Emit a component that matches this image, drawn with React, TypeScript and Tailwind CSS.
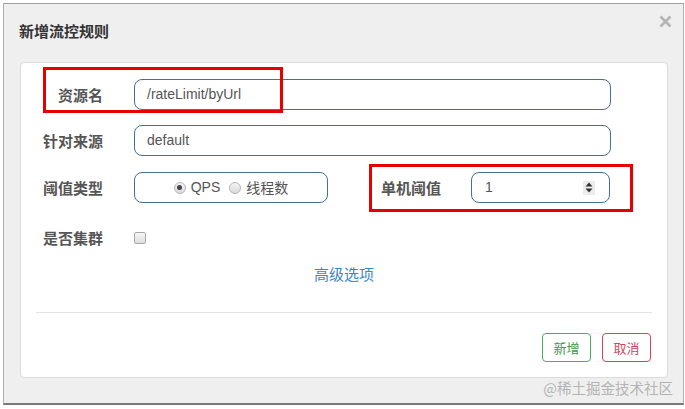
import React from "react";

const cjk = { fontFamily: '"Noto Sans CJK SC", "Liberation Sans", sans-serif' };
const latin = { fontFamily: '"Liberation Sans", "Noto Sans CJK SC", sans-serif' };

function Radio({ checked, label }: { checked?: boolean; label: string }) {
  return (
    <div className="flex items-center">
      <span className="flex h-[12px] w-[12px] items-center justify-center rounded-full border border-[#b5b5b5] bg-gradient-to-b from-[#f4f4f4] to-[#dcdcdc]">
        {checked && <span className="h-[5px] w-[5px] rounded-full bg-[#444]" />}
      </span>
      <span className="ml-[5px] text-[14px] text-[#555]" style={label === "QPS" ? latin : cjk}>
        {label}
      </span>
    </div>
  );
}

function Label({ children, w = "w-[82px]" }: { children: React.ReactNode; w?: string }) {
  return (
    <div className={`${w} text-right text-[15px] font-bold leading-[31px] text-[#555]`} style={cjk}>
      {children}
    </div>
  );
}

export default function App() {
  return (
    <div className="relative h-[409px] w-[685px] bg-white">
      <div className="ml-[3px] mt-[3px] flex h-[402px] w-[681px] flex-col border-x border-t border-b-2 border-x-[#b0b0b0] border-t-[#a0a0a0] border-b-[#7a7a7a] bg-[#efefef]">
        {/* header */}
        <div className="relative h-[58px] pl-[15px] pt-[16px]">
          <div className="text-[15px] font-bold leading-[22px] text-[#333]" style={cjk}>
            新增流控规则
          </div>
          <svg className="absolute right-[11px] top-[11px]" width="13" height="13" viewBox="0 0 13 13">
            <path d="M1.5 1.5 L11.5 11.5 M11.5 1.5 L1.5 11.5" stroke="#b4b4b4" strokeWidth="2.6" />
          </svg>
        </div>

        {/* panel */}
        <div className="relative ml-[16px] h-[316px] w-[648px] rounded-[4px] border border-[#dcdcdc] bg-white pt-[16px]">
          {/* red highlight boxes */}
          <div className="pointer-events-none absolute left-[22px] top-[4px] h-[46px] w-[240px] border-[3px] border-[#e60000]" />
          <div className="pointer-events-none absolute left-[348px] top-[101px] h-[48px] w-[264px] border-[3px] border-[#e60000]" />

          {/* row 1 */}
          <div className="flex h-[31px] items-center">
            <Label>资源名</Label>
            <div className="ml-[31px] flex h-[31px] w-[477px] items-center rounded-[8px] border border-[#44719a] px-[12px] text-[14px] text-[#555]" style={latin}>
              /rateLimit/byUrl
            </div>
          </div>

          {/* row 2 */}
          <div className="mt-[15px] flex h-[31px] items-center">
            <Label>针对来源</Label>
            <div className="ml-[31px] flex h-[31px] w-[477px] items-center rounded-[8px] border border-[#44719a] px-[12px] text-[14px] text-[#555]" style={latin}>
              default
            </div>
          </div>

          {/* row 3 */}
          <div className="mt-[16px] flex h-[31px] items-center">
            <Label>阈值类型</Label>
            <div className="ml-[31px] flex h-[31px] w-[194px] items-center justify-center gap-[9px] rounded-[8px] border border-[#44719a]">
              <Radio checked label="QPS" />
              <Radio label="线程数" />
            </div>
            <Label w="w-[61px] ml-[52px]">单机阈值</Label>
            <div className="ml-[30px] flex h-[31px] w-[139px] items-center justify-between rounded-[8px] border border-[#44719a] pl-[13px] pr-[14px] text-[14px] text-[#555]" style={latin}>
              <span>1</span>
              <span className="flex h-[14px] w-[12px] items-center justify-center bg-[#ececec]">
                <svg width="8" height="11" viewBox="0 0 8 11">
                  <path d="M4 0.5 L7.5 4.5 L0.5 4.5 Z" fill="#333" />
                  <path d="M4 10.5 L7.5 6.5 L0.5 6.5 Z" fill="#333" />
                </svg>
              </span>
            </div>
          </div>

          {/* row 4 */}
          <div className="mt-[19px] flex h-[31px] items-center">
            <Label>是否集群</Label>
            <span className="ml-[31px] h-[12px] w-[12px] rounded-[2px] border border-[#a9a9a9] bg-gradient-to-b from-[#f6f6f6] to-[#dedede]" />
          </div>

          {/* row 5 */}
          <div className="mt-[10px] flex h-[22px] items-center justify-center text-[15px] text-[#3a87c8]" style={cjk}>
            高级选项
          </div>

          {/* divider */}
          <div className="mx-[15px] mt-[27px] h-px bg-[#e3e3e3]" />

          {/* buttons */}
          <div className="mr-[16px] mt-[20px] flex justify-end gap-[11px]">
            <div className="flex h-[29px] w-[49px] items-center justify-center rounded-[4px] border border-[#4cae5c] text-[13px] text-[#3d9a47]" style={cjk}>
              新增
            </div>
            <div className="flex h-[29px] w-[49px] items-center justify-center rounded-[4px] border border-[#d2455f] text-[13px] text-[#d2455f]" style={cjk}>
              取消
            </div>
          </div>
        </div>

        {/* watermark */}
        <div className="mr-[10px] mt-[0px] text-right text-[14.5px] leading-[20px] text-[#b4b4b4]" style={cjk}>
          @稀土掘金技术社区
        </div>
      </div>
    </div>
  );
}
